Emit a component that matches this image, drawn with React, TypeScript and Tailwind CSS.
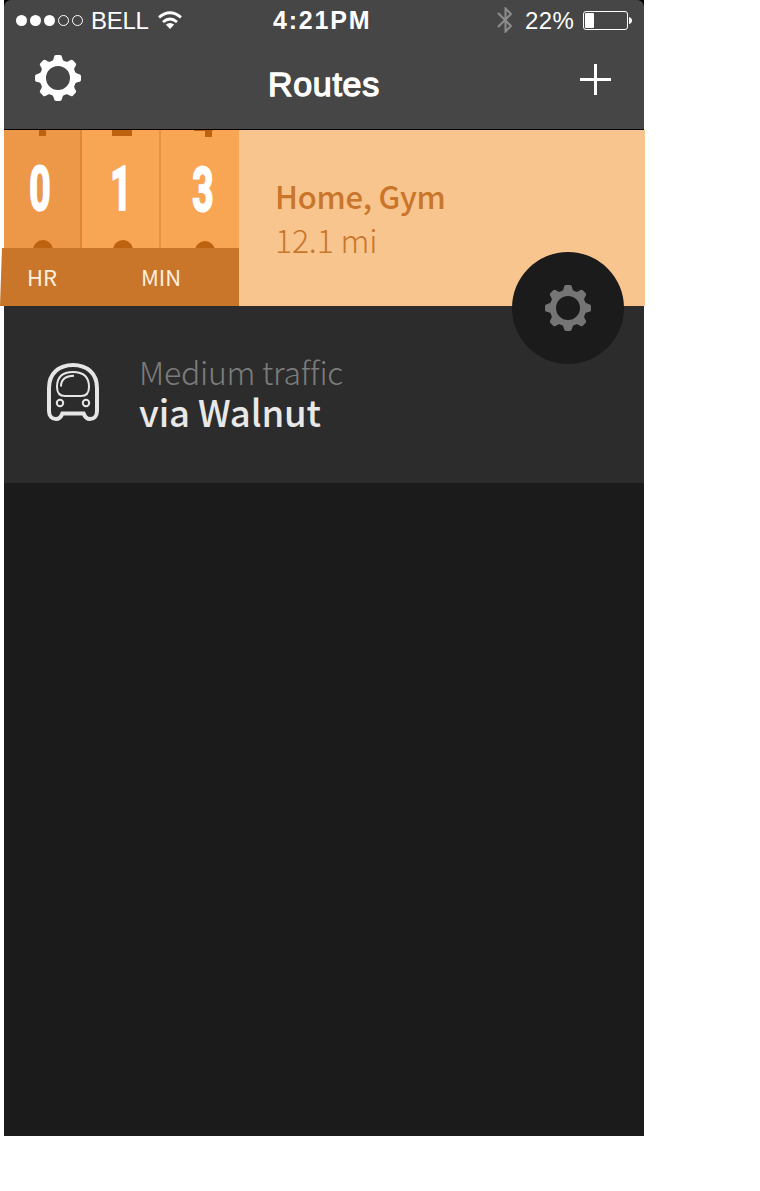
import React from "react";

const teeth = [0, 45, 90, 135, 180, 225, 270, 315];

function Gear({ className }: { className: string }) {
  return (
    <svg viewBox="-23 -23 46 46" className={className} fill="currentColor">
      <circle r="15" fill="none" stroke="currentColor" strokeWidth="6" />
      {teeth.map((a) => (
        <path
          key={a}
          transform={`rotate(${a})`}
          d="M-8.2-15.5C-5-17-4.5-18.5-4.1-20.6Q-3.8-23-2-23H2Q3.8-23 4.1-20.6C4.5-18.5 5-17 8.2-15.5L5-13H-5Z"
        />
      ))}
    </svg>
  );
}

function Signal() {
  return (
    <svg viewBox="0 0 68 12" className="h-3 w-[68px] shrink-0">
      {[0, 1, 2].map((i) => (
        <circle key={i} cx={5.5 + i * 14} cy="5.5" r="5.5" fill="white" />
      ))}
      {[3, 4].map((i) => (
        <circle key={i} cx={5.5 + i * 14} cy="5.5" r="5" fill="none" stroke="white" />
      ))}
    </svg>
  );
}

function Wifi() {
  return (
    <svg viewBox="0 0 24 18" className="mb-[2px] h-[18px] w-6 shrink-0" fill="none" stroke="white" strokeWidth="2.8">
      <path d="M1 6.4Q12-2.8 23 6.4" />
      <path d="M5 11Q12 5 19 11" />
      <path d="M12 18L7.8 13.6Q12 10.2 16.2 13.6Z" fill="white" stroke="none" />
    </svg>
  );
}

function Bus() {
  return (
    <svg viewBox="0 0 52 58" className="h-[58px] w-[52px] shrink-0 text-[#e6e6e6]" fill="none" stroke="currentColor">
      <path
        strokeWidth="4"
        d="M2 25C2 10.5 12 2 26 2S50 10.5 50 25V48C50 53 47 56 43 56C39.5 56 37.8 53.8 36.6 50.5H15.4C14.2 53.8 12.5 56 9 56C5 56 2 53 2 48Z"
      />
      <path strokeWidth="2" d="M10 24C10 13.5 16.5 9 26 9S42 13.5 42 24C42 30 39 33 34 33H18C13 33 10 30 10 24Z" />
      <path strokeWidth="2" d="M14 23.5C14 16.5 19 13 27 12.8" />
      <circle cx="13" cy="40" r="3.2" strokeWidth="2" />
      <circle cx="39" cy="40" r="3.2" strokeWidth="2" />
    </svg>
  );
}

function Digit({ children, className }: { children: string; className: string }) {
  return (
    <span
      className={`block w-10 scale-x-[0.61] text-center font-['Roboto',sans-serif] text-[61px] leading-[64px] font-bold text-white [-webkit-text-stroke:2.2px_white] ${className}`}
    >
      {children}
    </span>
  );
}

export default function App() {
  return (
    <div className="h-[1191px] w-[760px] overflow-hidden bg-white">
      <div className="ml-1 h-[1136px] w-[640px] bg-[#1b1b1b]">
        <header className="h-[130px] border-b border-black bg-black text-white">
          <div className="h-[129px] rounded-t-[7px] bg-[#464646] font-['Liberation_Sans',sans-serif]">
            <div className="grid h-[41px] grid-cols-[269px_113px_1fr] items-center pt-px text-2xl leading-6">
              <div className="flex items-center pl-3">
                <Signal />
                <span className="ml-[7px] w-[60px] tracking-[-0.3px]">BELL</span>
                <span className="ml-[7px]"><Wifi /></span>
              </div>
              <span className="mb-[2px] text-[25px] font-bold tracking-[1.8px]">4:21PM</span>
              <div className="flex items-center pl-[111px]">
                <svg viewBox="0 0 16 26" className="mb-[2px] h-[26px] w-4 shrink-0" fill="none" stroke="#8c8c8c" strokeWidth="2">
                  <path d="M1 6L14 19L8.5 24.5V1.5L14 7L1 20" />
                </svg>
                <span className="ml-3 w-[52px] tracking-[0.4px] whitespace-nowrap">22%</span>
                <svg viewBox="0 0 50 20" className="ml-[6px] h-5 w-[50px] shrink-0" fill="white">
                  <rect x=".5" y=".5" width="44" height="18" rx="2.5" fill="none" stroke="white" />
                  <rect x="2" y="2" width="9" height="15" rx="1" />
                  <path d="M46 6Q49 7 49 9.5T46 13Z" />
                </svg>
              </div>
            </div>
            <div className="grid h-[88px] grid-cols-[233px_1fr_31px] pr-[33px] pl-[31px]">
              <Gear className="mt-[14px] size-[46px]" />
              <h1 className="mt-[23px] text-[34px] leading-10 font-normal tracking-[0.7px] [-webkit-text-stroke:1.3px_white]">Routes</h1>
              <svg viewBox="0 0 31 31" className="mt-[23px] size-[31px]" fill="white">
                <path d="M14 0H17V14H31V17H17V31H14V17H0V14H14Z" />
              </svg>
            </div>
          </div>
        </header>

        <section className="-ml-1 flex h-[176px] w-[645px] bg-[linear-gradient(to_right,white_4px,#f8c58e_4px)] font-['Noto_Sans_CJK_SC',sans-serif]">
          <div className="w-[239px]">
            <div className="ml-1 grid h-[118px] grid-cols-[78px_79px_78px] bg-[#f8a654]">
              <div className="overflow-hidden border-r-2 border-[#df8736] bg-[#ed9848]">
                <div className="ml-[35px] h-[6px] w-[7px] bg-[#bd6310]" />
                <Digit className="mt-[21px] ml-4">0</Digit>
                <div className="mt-[19px] ml-[29px] size-5 rounded-full bg-[#bd6310]" />
              </div>
              <div className="overflow-hidden border-r-2 border-[#e8913e]">
                <div className="ml-[30px] h-[6px] w-5 bg-[#bd6310]" />
                <Digit className="mt-[21px] ml-[19px]">1</Digit>
                <div className="mt-[19px] ml-[31px] size-5 rounded-full bg-[#bd6310]" />
              </div>
              <div className="overflow-hidden">
                <svg viewBox="0 0 20 7" className="ml-[33px] h-[7px] w-5 fill-[#bd6310]">
                  <path d="M0 0H19V1H18V7H11V1H0Z" />
                </svg>
                <Digit className="mt-[21px] ml-[22px]">3</Digit>
                <div className="mt-[19px] ml-[34px] size-5 rounded-full bg-[#bd6310]" />
              </div>
            </div>
            <div className="flex h-[58px] bg-[#c9762b] pt-[12px] text-[22px] leading-8 text-[#fff0df] [clip-path:polygon(2px_0,100%_0,100%_100%,0_100%)]">
              <span className="ml-[27px] w-[114px]">HR</span>
              <span>MIN</span>
            </div>
          </div>
          <div className="grow pt-[44px] pl-9 text-[#c9762b]">
            <div className="h-[43px] text-[31px] leading-[44px] font-medium tracking-[-0.25px]">Home, Gym</div>
            <div className="h-[44px] text-[32px] leading-[44px] font-light tracking-[-0.2px]">12.1 mi</div>
          </div>
          <div className="relative z-10 mt-[122px] mr-[21px] flex size-28 shrink-0 items-center justify-center rounded-full bg-[#1b1b1b] text-[#757575]">
            <Gear className="size-[46px]" />
          </div>
        </section>

        <section className="flex h-[177px] bg-[#2c2c2c] pt-[57px] pl-[43px] font-['Noto_Sans_CJK_SC',sans-serif]">
          <Bus />
          <div className="-mt-[12px] ml-10">
            <div className="h-[41px] text-[32px] leading-10 font-light tracking-[-0.25px] text-[#7c7c7c] [font-variant-ligatures:common-ligatures]">Medium traffic</div>
            <div className="h-10 text-[36.5px] leading-10 font-medium tracking-[-0.15px] text-[#e8e8e8]">via Walnut</div>
          </div>
        </section>
      </div>
    </div>
  );
}
